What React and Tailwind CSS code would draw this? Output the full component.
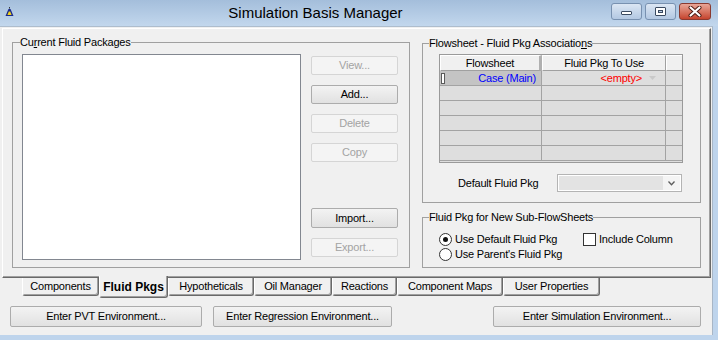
import React from "react";

function Btn({ children, disabled, className = "" }) {
  return (
    <div
      className={`flex items-center justify-center rounded-[2px] border ${
        disabled
          ? "border-[#d5d5d5] bg-[#f4f4f4] text-[#a3a3a3]"
          : "border-[#acacac] bg-linear-to-b from-[#f3f3f3] to-[#e1e1e1] text-black"
      } ${className}`}
    >
      {children}
    </div>
  );
}

const tabs = [
  { label: "Components", cls: "w-[77px]" },
  { label: "Fluid Pkgs", cls: "w-[69px]", sel: true },
  { label: "Hypotheticals", cls: "w-[86px]" },
  { label: "Oil Manager", cls: "w-[78px]" },
  { label: "Reactions", cls: "w-[65px]" },
  { label: "Component Maps", cls: "w-[106px]" },
  { label: "User Properties", cls: "w-[97px]" },
];

function GridRow({ first }) {
  return (
    <div className="flex h-[15px] border-b border-b-[#a3a3a3]">
      <div
        className={`flex w-[102px] items-center justify-between border-r border-r-[#a3a3a3] ${
          first ? "bg-[#c4c4c4]" : ""
        }`}
      >
        {first ? (
          <>
            <div className="ml-[1px] h-[11px] w-[4px] border border-[#5a5a5a] bg-white" />
            <span className="pr-[5px] text-[#0000ff]">Case (Main)</span>
          </>
        ) : null}
      </div>
      <div className="flex w-[124px] items-center justify-end border-r border-r-[#a3a3a3]">
        {first ? (
          <>
            <span className="text-[#ff0000]">&lt;empty&gt;</span>
            <svg width="7" height="4" viewBox="0 0 7 4" className="ml-[7px] mr-[9px]">
              <path d="M0 0 L7 0 L3.5 4 Z" fill="#c9c9c9" />
            </svg>
          </>
        ) : null}
      </div>
      <div className="flex-1" />
    </div>
  );
}

export default function App() {
  return (
    <div className="flex h-[340px] w-[718px] flex-col overflow-hidden bg-[#bed4ec] font-[family-name:'Liberation_Sans',Arial,sans-serif] text-[11px] leading-[13px] tracking-[-0.2px] text-black">
      {/* Title bar */}
      <div className="flex h-[26px] items-start bg-linear-to-b from-[#a4bedb] to-[#c2d7ed]">
        <div className="ml-[5px] mt-[7px] w-[15px]">
          <svg width="9" height="10" viewBox="0 0 9 10">
            <path d="M4 0 L5 0 L5 3 Z" fill="#222" />
            <path d="M3.5 2 L5.5 2 L8.5 9 L0.5 9 Z" fill="#1b2a8a" />
            <path d="M3.8 4.5 L5.2 4.5 L6.6 8 L2.4 8 Z" fill="#f2d21b" />
          </svg>
        </div>
        <div className="flex-1 text-center text-[15px] leading-[25px] tracking-normal">
          Simulation Basis Manager
        </div>
        <div className="mr-[7px] mt-[3px] flex h-[17px]">
          <div className="flex h-[17px] w-[31px] items-center justify-center rounded-[3px] border border-[#7891b0] bg-linear-to-b from-[#dbe6f3] to-[#b3c8e2]">
            <div className="mt-[3px] h-[4px] w-[11px] rounded-[1px] border border-[#3a4a60] bg-white" />
          </div>
          <div className="ml-[3px] flex h-[17px] w-[31px] items-center justify-center rounded-[3px] border border-[#7891b0] bg-linear-to-b from-[#dbe6f3] to-[#b3c8e2]">
            <div className="flex h-[9px] w-[11px] items-center justify-center rounded-[1px] border border-[#3a4a60] bg-white">
              <div className="h-[3px] w-[5px] border border-[#3a4a60] bg-[#b9cce4]" />
            </div>
          </div>
          <div className="ml-[3px] flex h-[17px] w-[32px] items-center justify-center rounded-[3px] border border-[#8a3a30] bg-linear-to-b from-[#e8a597] to-[#c5432d]">
            <svg width="14" height="11" viewBox="0 0 14 11">
              <path d="M2.5 1.5 L11.5 9.5 M11.5 1.5 L2.5 9.5" stroke="#4a1810" strokeWidth="4" strokeLinecap="round" />
              <path d="M2.5 1.5 L11.5 9.5 M11.5 1.5 L2.5 9.5" stroke="#ffffff" strokeWidth="2.2" strokeLinecap="round" />
            </svg>
          </div>
        </div>
      </div>

      {/* Body */}
      <div className="mb-[5px] mr-[5px] flex flex-1 flex-col border-r border-t border-r-[#a8b6c6] border-t-[#aebdcd] bg-[#f0f0f0]">
        {/* Tab page */}
        <div className="ml-[2px] mt-[1px] flex h-[250px] w-[709px] items-start border border-b-[#696969] border-l-white border-r-[#696969] border-t-white pl-[9px] pt-[7px] shadow-[inset_-1px_-1px_0_#a0a0a0]">
          {/* Left group */}
          <fieldset className="h-[232px] w-[398px] min-w-0 border border-[#a0a0a0] pl-[9px]">
            <legend className="ml-[-2px] px-0">
              Cu<span className="underline">r</span>rent Fluid Packages
            </legend>
            <div className="flex pt-[5px]">
              <div className="h-[206px] w-[279px] border border-[#828790] bg-white" />
              <div className="ml-[10px] flex w-[87px] flex-col">
                <Btn disabled className="mt-[2px] h-[19px]">View...</Btn>
                <Btn className="mt-[10px] h-[19px]">Add...</Btn>
                <Btn disabled className="mt-[10px] h-[19px]">Delete</Btn>
                <Btn disabled className="mt-[10px] h-[19px]">Copy</Btn>
                <Btn className="mt-[46px] h-[20px]">Import...</Btn>
                <Btn disabled className="mt-[10px] h-[19px]">Export...</Btn>
              </div>
            </div>
          </fieldset>

          {/* Right column */}
          <div className="ml-[12px] flex w-[279px] flex-col">
            <fieldset className="mt-[1px] h-[166px] w-[279px] min-w-0 border border-[#a0a0a0] pl-[16px]">
              <legend className="ml-[-10px] px-0">
                Flowsheet - Fluid Pkg Associatio<span className="underline">n</span>s
              </legend>
              <div className="pt-[4px]">
                <div className="h-[109px] w-[244px] overflow-hidden border border-[#9a9a9a] bg-[#dedede]">
                  <div className="flex h-[16px]">
                    <div className="flex w-[102px] items-center justify-center border-b border-l border-r-[3px] border-t border-b-[#a0a0a0] border-l-white border-r-[#b0b0b0] border-t-white bg-[#f0f0f0]">
                      Flowsheet
                    </div>
                    <div className="flex w-[124px] items-center justify-center border-b border-l border-r border-t border-b-[#a0a0a0] border-l-white border-r-[#a0a0a0] border-t-white bg-[#f0f0f0]">
                      Fluid Pkg To Use
                    </div>
                    <div className="flex-1 border-b border-l border-t border-b-[#a0a0a0] border-l-white border-t-white bg-[#f0f0f0]" />
                  </div>
                  <GridRow first />
                  <GridRow />
                  <GridRow />
                  <GridRow />
                  <GridRow />
                  <GridRow />
                </div>
                <div className="mt-[11px] flex items-center">
                  <span className="ml-[19px]">Default Fluid Pkg</span>
                  <div className="ml-auto mr-[18px] flex h-[18px] w-[125px] border border-[#b4b4b4] bg-white p-[1px]">
                    <div className="flex-1 bg-[#e3e3e3]" />
                    <div className="flex w-[17px] items-center justify-center bg-[#f4f4f4]">
                      <svg width="7" height="5" viewBox="0 0 7 5">
                        <path d="M0.5 0.5 L3.5 3.8 L6.5 0.5" stroke="#5c5c5c" strokeWidth="1.3" fill="none" />
                      </svg>
                    </div>
                  </div>
                </div>
              </div>
            </fieldset>

            <fieldset className="mt-[8px] h-[57px] w-[279px] min-w-0 border border-[#a0a0a0] pl-[16px]">
              <legend className="ml-[-10px] px-0">Fluid Pkg for New Sub-FlowSheets</legend>
              <div className="flex flex-col pt-[8px]">
                <div className="flex h-[14px] items-center">
                  <div className="flex w-[144px] items-center">
                    <div className="flex h-[13px] w-[13px] items-center justify-center rounded-full border border-[#333] bg-white">
                      <div className="h-[5px] w-[5px] rounded-full bg-[#111]" />
                    </div>
                    <span className="ml-[3px]">Use Default Fluid Pkg</span>
                  </div>
                  <div className="h-[13px] w-[13px] border border-[#333] bg-white" />
                  <span className="ml-[3px]">Include Column</span>
                </div>
                <div className="mt-[1px] flex h-[14px] items-center">
                  <div className="h-[13px] w-[13px] rounded-full border border-[#333] bg-white" />
                  <span className="ml-[3px]">Use Parent's Fluid Pkg</span>
                </div>
              </div>
            </fieldset>
          </div>
        </div>

        {/* Tabs */}
        <div className="flex h-[20px] items-start pl-[22px]">
          {tabs.map((t) =>
            t.sel ? (
              <div
                key={t.label}
                className={`relative z-10 -mt-[2px] flex h-[22px] items-center justify-center rounded-b-[3px] border-b border-l border-r border-b-[#696969] border-l-white border-r-[#696969] bg-[#f0f0f0] pt-[1px] text-[12px] font-bold tracking-normal shadow-[inset_-1px_-1px_0_#a0a0a0] ${t.cls}`}
              >
                {t.label}
              </div>
            ) : (
              <div
                key={t.label}
                className={`flex h-[18px] items-center justify-center rounded-b-[3px] border-b border-l border-r border-b-[#696969] border-l-white border-r-[#696969] bg-[#f0f0f0] shadow-[inset_-1px_-1px_0_#a0a0a0] ${t.cls}`}
              >
                {t.label}
              </div>
            )
          )}
        </div>

        {/* Bottom buttons */}
        <div className="mt-[8px] flex">
          <Btn className="ml-[10px] h-[21px] w-[192px]">Enter PVT Environment...</Btn>
          <Btn className="ml-[11px] h-[21px] w-[179px]">Enter Regression Environment...</Btn>
          <Btn className="ml-[101px] h-[21px] w-[208px]">Enter Simulation Environment...</Btn>
        </div>
      </div>
    </div>
  );
}
